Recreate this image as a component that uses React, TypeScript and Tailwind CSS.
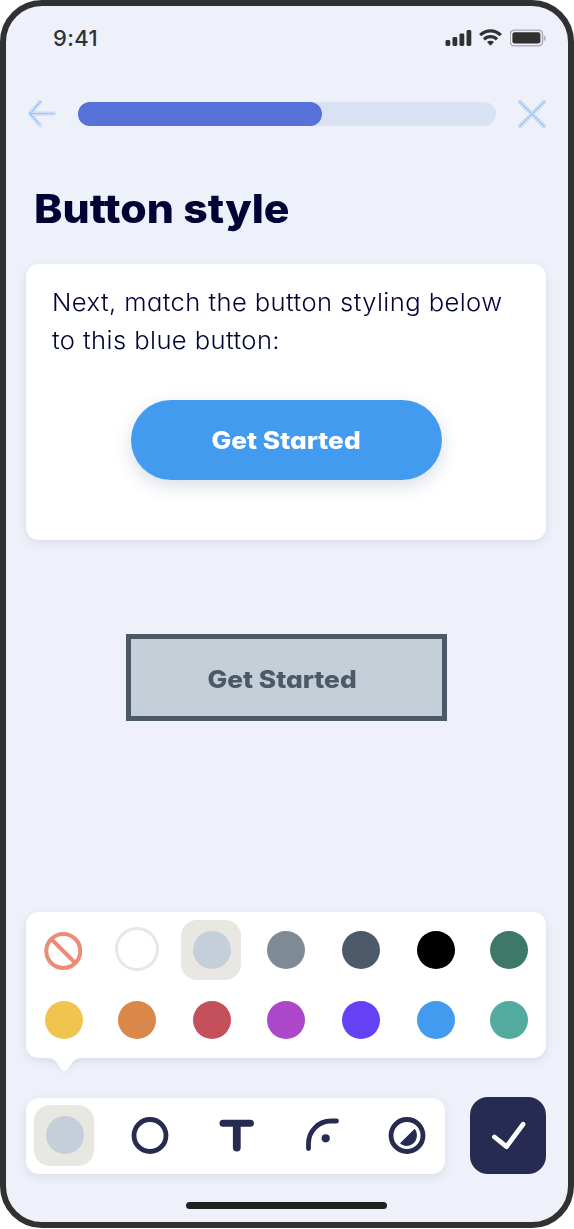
import React from "react";

type Swatch = { name: string; color: string };

const topSwatches: Swatch[] = [
  { name: "Slate", color: "bg-[#7e8a96]" },
  { name: "Charcoal", color: "bg-[#4c5a68]" },
  { name: "Black", color: "bg-black" },
  { name: "Pine", color: "bg-[#3d7869]" },
];

const bottomSwatches: Swatch[] = [
  { name: "Orange", color: "bg-[#d9884a]" },
  { name: "Red", color: "bg-[#c4505c]" },
  { name: "Purple", color: "bg-[#ad47c9]" },
  { name: "Indigo", color: "bg-[#6541f5]" },
  { name: "Blue", color: "bg-[#439bf0]" },
  { name: "Teal", color: "bg-[#53aba0]" },
];

function StatusBar() {
  return (
    <div className="flex h-[64px] items-center justify-between pl-[47px] pr-[21px] text-[#313131]">
      <span className="text-[22px] font-medium leading-none tracking-[0.4px]">9:41</span>
      <div className="flex items-center gap-[7px]">
        <svg width="27" height="18" viewBox="0 0 27 18" fill="currentColor">
          <rect x="0.5" y="11" width="4.8" height="6" rx="1.4" />
          <rect x="7.5" y="8" width="4.8" height="9" rx="1.4" />
          <rect x="14.5" y="4.5" width="4.8" height="12.5" rx="1.4" />
          <rect x="21.5" y="1" width="4.8" height="16" rx="1.4" />
        </svg>
        <svg width="24" height="18" viewBox="0 0 24 18" fill="none" stroke="currentColor" strokeWidth="3.2">
          <path d="M1.2 6.1a14.6 14.6 0 0 1 20.6 0" />
          <path d="M5 10.3a9.2 9.2 0 0 1 13 0" />
          <path d="M8 13.1a5 5 0 0 1 7 0L11.5 16.7Z" fill="currentColor" stroke="none" />
        </svg>
        <svg width="37" height="18" viewBox="0 0 37 18">
          <rect x="0.2" y="1.1" width="32.4" height="15.8" rx="4.3" fill="none" stroke="#a5a8b3" strokeWidth="1.4" />
          <rect x="2.4" y="3.2" width="28" height="11.4" rx="2.3" fill="#313131" />
          <path d="M34.2 6.2c2 1 2 4.8 0 5.8Z" fill="#a5a8b3" />
        </svg>
      </div>
    </div>
  );
}

function ProgressHeader() {
  return (
    <div className="mt-[29px] flex h-[30px] items-center pl-[21px] pr-[21px]">
      <svg width="30" height="30" viewBox="0 0 30 30" fill="none" strokeLinecap="round" strokeLinejoin="round">
        <path d="M13 3 3 14.5 13 26M3 14.5h24" stroke="#d6e1f5" strokeWidth="4.6" />
        <path d="M13 3 3 14.5 13 26M3 14.5h24" stroke="#8fbff2" strokeWidth="1.7" strokeDasharray="0.5 2.3" />
      </svg>
      <div className="ml-[21px] h-6 w-[418px] rounded-full bg-[#d9e1f5]">
        <div className="h-full w-[244px] rounded-full bg-[#5671d7]" />
      </div>
      <svg className="ml-[21px]" width="30" height="30" viewBox="0 0 30 30" fill="none" strokeLinecap="round">
        <path d="m3 3 24 24M27 3 3 27" stroke="#d6e1f5" strokeWidth="4.6" />
        <path d="m3 3 24 24M27 3 3 27" stroke="#8fbff2" strokeWidth="1.7" strokeDasharray="0.5 2.3" />
      </svg>
    </div>
  );
}

function Palette() {
  return (
    <div className="relative ml-5 mr-[22px] h-[146px] rounded-[13px] bg-white pt-2 shadow-[0_3px_10px_rgba(40,60,90,0.11)]">
      <div className="grid h-[60px] grid-cols-[74px_74px_74px_75px_76px_73px_73px] items-center">
        <div className="flex justify-center pt-0.5">
          <svg width="38" height="38" viewBox="0 0 38 38" fill="none" stroke="#eb8b78" strokeWidth="4">
            <circle cx="19.3" cy="19" r="17" />
            <path d="m7.3 7 24 24" />
          </svg>
        </div>
        <div className="flex justify-center pb-0.5">
          <div className="h-11 w-11 rounded-full border-[3px] border-[#e8e7e2] bg-white" />
        </div>
        <div className="flex justify-center">
          <div className="flex h-[60px] w-[60px] shrink-0 items-center justify-center rounded-2xl bg-[#e8e7e2] pl-[2px]">
            <div className="h-[38px] w-[38px] rounded-full bg-[#c5cfd9]" />
          </div>
        </div>
        {topSwatches.map((s) => (
          <div key={s.name} className="flex justify-center">
            <div className={`h-[38px] w-[38px] rounded-full ${s.color}`} />
          </div>
        ))}
      </div>
      <div className="mt-[21px] grid grid-cols-[74px_74px_75px_74px_76px_73px_73px]">
        <div className="flex justify-center pl-0.5">
          <div className="h-[38px] w-[38px] rounded-full bg-[#f0c44e]" />
        </div>
        {bottomSwatches.map((s) => (
          <div key={s.name} className="flex justify-center">
            <div className={`h-[38px] w-[38px] rounded-full ${s.color}`} />
          </div>
        ))}
      </div>
      <svg
        className="absolute left-[22px] top-[145px] drop-shadow-[0_2px_2px_rgba(40,60,90,0.06)]"
        width="34"
        height="15"
        viewBox="0 0 34 15"
        fill="white"
      >
        <path d="M0 0v1c4 0 7 2 9 5l3.5 5.5c2.2 3.3 5.3 3.3 7.7 0L24 6c2-3 5-5 9-5V0Z" />
      </svg>
    </div>
  );
}

function Toolbar() {
  return (
    <div className="ml-5 mr-[22px] mt-[39px] flex h-[77px] items-start justify-between">
      <div className="mt-px flex h-[76px] w-[419px] items-center rounded-[13px] bg-white pl-2 text-[#272a51] shadow-[0_3px_10px_rgba(40,60,90,0.11)]">
        <div className="mb-px flex h-[61px] w-[60px] items-center justify-center rounded-2xl bg-[#e8e7e2] pb-px pl-[2px]">
          <div className="h-[38px] w-[38px] rounded-full bg-[#c5cfd9]" />
        </div>
        <svg className="ml-[37px]" width="38" height="38" viewBox="0 0 38 38" fill="none" stroke="currentColor" strokeWidth="4.8">
          <circle cx="19" cy="18.5" r="16" />
        </svg>
        <svg className="ml-[49px]" width="38" height="38" viewBox="0 0 38 38" fill="none" stroke="currentColor" strokeLinecap="round">
          <path d="M5 6.2h27.4" strokeWidth="7" />
          <path d="M18.8 8v22.5" strokeWidth="7.8" />
        </svg>
        <svg className="ml-[48px]" width="38" height="38" viewBox="0 0 38 38" fill="none" stroke="currentColor" strokeWidth="4.8" strokeLinecap="round">
          <path d="M4.5 31.5v-5A22.5 22.5 0 0 1 27 4h5.5" />
          <circle cx="21.7" cy="21.3" r="4.1" fill="currentColor" stroke="none" />
        </svg>
        <svg className="ml-[46px]" width="38" height="38" viewBox="0 0 38 38">
          <circle cx="19" cy="18.5" r="16" fill="none" stroke="currentColor" strokeWidth="4.8" />
          <path d="m12 26.2 14.7-14.4c2.3 2.5 2.9 7 1.5 10.5-2.2 6-10.5 9.3-16.2 3.9Z" fill="currentColor" />
        </svg>
      </div>
      <button className="flex h-[77px] w-[76px] items-center justify-center rounded-[18px] bg-[#272a51]" aria-label="Confirm">
        <svg width="38" height="38" viewBox="0 0 38 38" fill="none" stroke="white" strokeWidth="4.8" strokeLinecap="round" strokeLinejoin="round">
          <path d="m5.5 20 12 9.7L34 7.3" />
        </svg>
      </button>
    </div>
  );
}

export default function App() {
  return (
    <main className="h-[1229px] w-[574px] bg-white font-['Inter','Liberation_Sans',sans-serif] [font-feature-settings:'cv11']">
      <div className="flex h-[1228px] flex-col overflow-hidden rounded-[42px] border-[6px] border-[#313131] bg-[#eef1fa]">
        <StatusBar />
        <ProgressHeader />
        <h1 className="ml-[28px] mt-[50px] h-[60px] origin-left scale-x-[1.07] whitespace-nowrap text-[40px] font-extrabold leading-[60px] text-[#010335]">
          Button style
        </h1>
        <section className="ml-5 mr-[22px] mt-[25px] h-[276px] rounded-[13px] bg-white pt-5 text-[#010335] shadow-[0_3px_10px_rgba(40,60,90,0.11)]">
          <p className="ml-[26px] origin-left scale-x-[1.065] whitespace-nowrap text-[24px] font-[350] leading-[38px] tracking-[0.4px]">
            <span className="block">Next, match the button styling below</span>
            <span className="block">to this blue button:</span>
          </p>
          <button className="ml-[105px] mt-10 block h-20 w-[311px] whitespace-nowrap rounded-full bg-[#439bf0] pt-0.5 text-[24px] font-extrabold leading-none text-white shadow-[0_6px_18px_rgba(50,65,130,0.18)]">
            <span className="inline-block scale-x-[1.095]">Get Started</span>
          </button>
        </section>
        <button className="ml-[120px] mt-[94px] h-[87px] w-[321px] shrink-0 whitespace-nowrap border-[5px] border-[#4c5a68] bg-[#c5cfd8] pr-[9px] pt-[4px] text-[24px] font-extrabold leading-none text-[#4c5a68]">
          <span className="inline-block scale-x-[1.095]">Get Started</span>
        </button>
        <div className="mt-[191px]">
          <Palette />
          <Toolbar />
        </div>
        <div className="ml-[180px] mt-7 h-[7px] w-[201px] shrink-0 rounded-full bg-[#202222]" />
      </div>
    </main>
  );
}
